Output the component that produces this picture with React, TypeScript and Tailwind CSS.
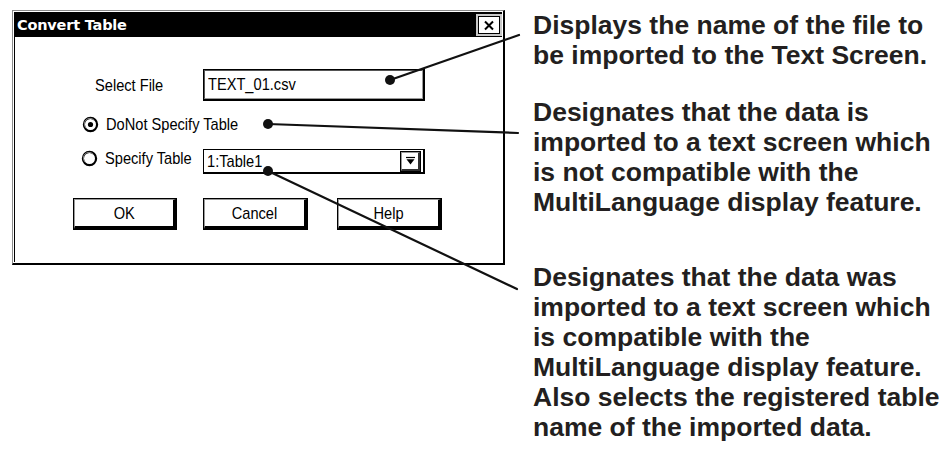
function Radio({ checked }: { checked: boolean }) {
  return (
    <svg width="17" height="17" viewBox="0 0 17 17" className="shrink-0">
      <circle cx="8.5" cy="8.5" r="6.6" fill="white" stroke="black" strokeWidth="2.2" />
      <path d="M4 12 A5.3 5.3 0 0 1 12 4" fill="none" stroke="#808080" strokeWidth="1" />
      {checked && <circle cx="8.5" cy="8.5" r="2.6" fill="black" />}
    </svg>
  );
}

// the dialog's font is a tall, narrow system face; squeeze Liberation Sans to match
function Narrow({ children, center }: { children: React.ReactNode; center?: boolean }) {
  return (
    <span className={`inline-block whitespace-nowrap scale-x-[0.86] ${center ? "origin-center" : "origin-left"}`}>
      {children}
    </span>
  );
}

function WinButton({ label, isDefault }: { label: string; isDefault?: boolean }) {
  return (
    <div className={`h-[32px] border border-black ${isDefault ? "w-[104px]" : "w-[105px]"}`}>
      <div className="h-full w-full flex items-center justify-center border-t border-l border-[#9a9a9a] border-r-[3px] border-b-[3px] border-r-black border-b-black">
        <Narrow center>{label}</Narrow>
      </div>
    </div>
  );
}

export default function App() {
  const dialogFont = { fontFamily: '"Liberation Sans", Arial, sans-serif' };
  return (
    <div className="relative w-[951px] h-[464px] bg-white flex items-start overflow-hidden">
      {/* dialog */}
      <div
        className="ml-[12px] mt-[10px] w-[493px] h-[255px] shrink-0 bg-white border-t border-l border-[#8a8a8a] border-r-2 border-b-2 border-r-black border-b-black p-[1px] flex text-black text-[17px] leading-none"
        style={dialogFont}
      >
        <div className="flex-1 border-l border-t border-black flex flex-col">
          <div className="h-[24px] bg-black flex items-center justify-between pl-[2px] pr-0">
            <span
              className="text-white font-bold text-[14.5px] tracking-[-0.2px]"
              style={{ fontFamily: '"DejaVu Sans", Verdana, sans-serif' }}
            >
              Convert Table
            </span>
            <div className="w-[26px] h-[22px] bg-[#c8c8c8] flex items-center justify-center">
              <div className="w-[22px] h-[18px] bg-white border border-black flex items-center justify-center">
                <svg width="12" height="11" viewBox="0 0 12 11">
                  <path d="M2 1.5 L10 9.5 M10 1.5 L2 9.5" stroke="black" strokeWidth="2" />
                </svg>
              </div>
            </div>
          </div>

          {/* Select File row */}
          <div className="mt-[32px] pl-[80px] flex items-center">
            <span className="w-[108px]">
              <Narrow>Select File</Narrow>
            </span>
            <div className="w-[222px] h-[32px] border-t border-l border-black border-r-2 border-b-2 border-r-black border-b-black">
              <div className="h-full w-full border-t border-l border-[#555] border-r border-b border-r-[#9a9a9a] border-b-[#9a9a9a] flex items-center pl-[3px]">
                <Narrow>TEXT_01.csv</Narrow>
              </div>
            </div>
          </div>

          {/* DoNot Specify Table */}
          <div className="mt-[13px] h-[20px] pl-[67px] flex items-center gap-[7px]">
            <Radio checked />
            <Narrow>DoNot Specify Table</Narrow>
          </div>

          {/* Specify Table */}
          <div className="mt-[15px] pl-[66px] flex items-center">
            <div className="w-[122px] flex items-center gap-[7px] pb-[6px]">
              <Radio checked={false} />
              <Narrow>Specify Table</Narrow>
            </div>
            <div className="w-[222px] h-[25px] border-t border-l border-black border-r-2 border-b-2 border-r-black border-b-black flex items-center">
              <div className="flex-1 pl-[3px]">
                <Narrow>1:Table1</Narrow>
              </div>
              <div className="w-[21px] h-[21px] mr-[2px] border border-black bg-white flex items-center justify-center">
                <div className="w-full h-full border-t border-l border-[#9a9a9a] border-r-2 border-b-2 border-r-[#303030] border-b-[#303030] flex items-center justify-center">
                  <svg width="11" height="10" viewBox="0 0 11 10">
                    <path d="M1 1.5 H10" stroke="black" strokeWidth="1.2" />
                    <path d="M1.5 3.2 L9.5 3.2 L5.5 8.5 Z" fill="black" />
                  </svg>
                </div>
              </div>
            </div>
          </div>

          {/* buttons */}
          <div className="mt-[24px] pl-[58px] flex items-center">
            <WinButton label="OK" isDefault />
            <div className="ml-[26px]">
              <WinButton label="Cancel" />
            </div>
            <div className="ml-[29px]">
              <WinButton label="Help" />
            </div>
          </div>
        </div>
      </div>

      {/* descriptions */}
      <div
        className="ml-[28px] pt-[10px] flex flex-col text-[26.5px] leading-[30px] font-bold text-[#231f20] whitespace-nowrap"
        style={{ fontFamily: '"Liberation Sans", Arial, sans-serif' }}
      >
        <p>
          Displays the name of the file to
          <br />
          be imported to the Text Screen.
        </p>
        <p className="mt-[27px]">
          Designates that the data is
          <br />
          imported to a text screen which
          <br />
          is not compatible with the
          <br />
          MultiLanguage display feature.
        </p>
        <p className="mt-[45px]">
          Designates that the data was
          <br />
          imported to a text screen which
          <br />
          is compatible with the
          <br />
          MultiLanguage display feature.
          <br />
          Also selects the registered table
          <br />
          name of the imported data.
        </p>
      </div>

      {/* leader lines */}
      <svg className="absolute inset-0 pointer-events-none" width="951" height="464">
        <g stroke="#111" strokeWidth="2.2" strokeLinecap="round">
          <line x1="390" y1="80" x2="519" y2="35" />
          <line x1="268" y1="124" x2="518" y2="133" />
          <line x1="268" y1="171" x2="517" y2="289" />
        </g>
        <circle cx="390" cy="80" r="5" fill="#111" />
        <circle cx="268" cy="124" r="5" fill="#111" />
        <circle cx="268" cy="171" r="5" fill="#111" />
      </svg>
    </div>
  );
}
